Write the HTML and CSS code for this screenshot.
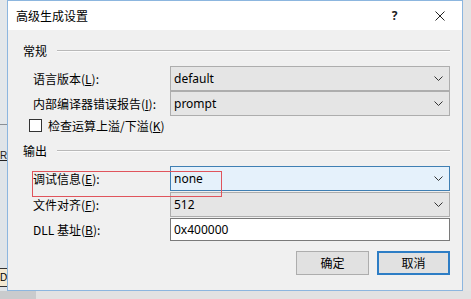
FILE: index.html
```html
<!DOCTYPE html>
<html lang="zh-CN">
<head>
<meta charset="utf-8">
<title>高级生成设置</title>
<link rel="stylesheet" href="styles.css">
</head>
<body>
<div class="desk">
  <div class="strip">
    <div class="strip-top"></div>
    <div class="strip-r"><u>R</u></div>
    <div class="strip-fill"></div>
    <div class="strip-d">D</div>
  </div>
  <div class="window">
    <div class="titlebar">
      <span class="title">高级生成设置</span>
      <span class="tbtn help">?</span>
      <span class="tbtn close">
        <svg width="10" height="10" viewBox="0 0 10 10"><path d="M0.5 0.5 L9.5 9.5 M9.5 0.5 L0.5 9.5" stroke="#222" stroke-width="1" fill="none"/></svg>
      </span>
    </div>
    <div class="body">
      <div class="group-head"><span>常规</span><i class="rule"></i></div>
      <div class="rows first">
        <div class="row">
          <span class="label">语言版本(<u>L</u>):</span>
          <div class="combo"><span class="val">default</span><svg class="chev" width="9" height="6" viewBox="0 0 9 6"><path d="M0.5 0.5 L4.5 4.5 L8.5 0.5" stroke="#333" stroke-width="1" fill="none"/></svg></div>
        </div>
        <div class="row">
          <span class="label">内部编译器错误报告(<u>I</u>):</span>
          <div class="combo"><span class="val">prompt</span><svg class="chev" width="9" height="6" viewBox="0 0 9 6"><path d="M0.5 0.5 L4.5 4.5 L8.5 0.5" stroke="#333" stroke-width="1" fill="none"/></svg></div>
        </div>
      </div>
      <div class="check-row">
        <span class="box"></span>
        <span class="label">检查运算上溢/下溢(<u>K</u>)</span>
      </div>
      <div class="group-head second"><span>输出</span><i class="rule"></i></div>
      <div class="rows first">
        <div class="row">
          <span class="label">调试信息(<u>E</u>):</span>
          <div class="combo hot"><span class="val">none</span><svg class="chev" width="9" height="6" viewBox="0 0 9 6"><path d="M0.5 0.5 L4.5 4.5 L8.5 0.5" stroke="#333" stroke-width="1" fill="none"/></svg></div>
        </div>
        <div class="row">
          <span class="label">文件对齐(<u>F</u>):</span>
          <div class="combo"><span class="val">512</span><svg class="chev" width="9" height="6" viewBox="0 0 9 6"><path d="M0.5 0.5 L4.5 4.5 L8.5 0.5" stroke="#333" stroke-width="1" fill="none"/></svg></div>
        </div>
        <div class="row">
          <span class="label">DLL 基址(<u>B</u>):</span>
          <div class="textbox"><span class="val">0x400000</span></div>
        </div>
      </div>
      <div class="buttons">
        <span class="btn">确定</span>
        <span class="btn default">取消</span>
      </div>
      <div class="annot"></div>
    </div>
  </div>
  <div class="rightside"></div>
</div>
<div class="ground"><div class="ground-left"></div></div>
</body>
</html>
```

FILE: styles.css
```css
html, body {
  margin: 0;
  padding: 0;
}
body {
  width: 471px;
  height: 299px;
  overflow: hidden;
  background: #e6e6e6;
  font-family: "Noto Sans CJK SC", "Noto Sans", sans-serif;
  font-size: 12px;
  color: #000;
}
u { text-decoration: underline; text-underline-offset: 1px; }

.desk {
  display: flex;
  height: 291px;
}

.strip {
  width: 7px;
  display: flex;
  flex-direction: column;
  background: #dfe4e8;
  overflow: hidden;
}
.strip-top {
  height: 124px;
  border-bottom: 1px solid #8a8f94;
  background: #e3e7ea;
}
.strip-r {
  margin-top: 22px;
  height: 18px;
  line-height: 18px;
  font-family: "Liberation Sans Narrow", "Liberation Sans", sans-serif;
  font-size: 10px;
  color: #222;
}
.strip-fill { flex: 1; }
.strip-d {
  height: 17px;
  line-height: 17px;
  margin-bottom: 4px;
  border-top: 1px solid #333;
  border-bottom: 1px solid #333;
  background: #f3e9d2;
  font-family: "Liberation Sans", sans-serif;
  font-size: 10px;
}

.window {
  width: 456px;
  height: 291px;
  box-sizing: border-box;
  border: 1px solid #8cb6df;
  background: #f0f0f0;
  display: flex;
  flex-direction: column;
  position: relative;
}
.rightside {
  flex: 1;
  background: #e4e4e4;
}

.titlebar {
  height: 29px;
  background: #fff;
  display: flex;
  align-items: center;
}
.title {
  padding-left: 8px;
  flex: 1;
  line-height: 16px;
}
.tbtn {
  width: 45px;
  height: 29px;
  display: flex;
  align-items: center;
  justify-content: center;
}
.help {
  font-family: "Noto Sans", sans-serif;
  font-weight: bold;
  font-size: 12px;
  color: #222;
}
.close { width: 45px; }

.body {
  flex: 1;
  padding: 13px 12px 0 15px;
  position: relative;
}
.group-head {
  display: flex;
  align-items: center;
  height: 16px;
  line-height: 16px;
}
.group-head.second { margin-top: 7px; }
.rule {
  flex: 1;
  margin-left: 10px;
  border-top: 1px solid #b9b9b9;
  border-bottom: 1px solid #fbfbfb;
}

.rows {
  padding-left: 10px;
  display: flex;
  flex-direction: column;
  gap: 1px;
}
.rows.first { margin-top: 7px; }
.row {
  display: flex;
  align-items: center;
  height: 25px;
}
.label {
  width: 137px;
  line-height: 16px;
  white-space: nowrap;
}
.check-row .label { width: auto; }

.combo, .textbox {
  flex: 1;
  height: 25px;
  box-sizing: border-box;
  border: 1px solid #adadad;
  background: #e5e5e5;
  display: flex;
  align-items: center;
  padding: 0 6px 0 3px;
}
.combo.hot {
  background: #e5f1fb;
  border-color: #3f7fb3;
}
.textbox {
  height: 23px;
  background: #fff;
  border-color: #7a7a7a;
}
.row:last-child { height: 23px; }
.val {
  flex: 1;
  font-family: "Noto Sans", sans-serif;
  font-size: 12px;
  line-height: 16px;
}
.chev { display: block; }

.check-row {
  display: flex;
  align-items: center;
  height: 21px;
  padding-left: 6px;
}
.box {
  width: 13px;
  height: 13px;
  box-sizing: border-box;
  border: 1px solid #333;
  background: #fff;
  margin-right: 6px;
}

.buttons {
  display: flex;
  justify-content: flex-end;
  gap: 8px;
  margin-top: 10px;
}
.btn {
  width: 73px;
  height: 24px;
  box-sizing: border-box;
  border: 1px solid #adadad;
  background: #e1e1e1;
  display: flex;
  align-items: center;
  justify-content: center;
  line-height: 16px;
}
.btn.default {
  border: 2px solid #2d7dc5;
}

.annot {
  position: absolute;
  left: 24px;
  top: 141px;
  width: 190px;
  height: 26px;
  box-sizing: border-box;
  border: 1px solid #e0545c;
  pointer-events: none;
}

.ground {
  height: 8px;
  background: #e2e2e2;
  display: flex;
}
.ground-left {
  width: 36px;
  background: #c9cbcd;
}
```
